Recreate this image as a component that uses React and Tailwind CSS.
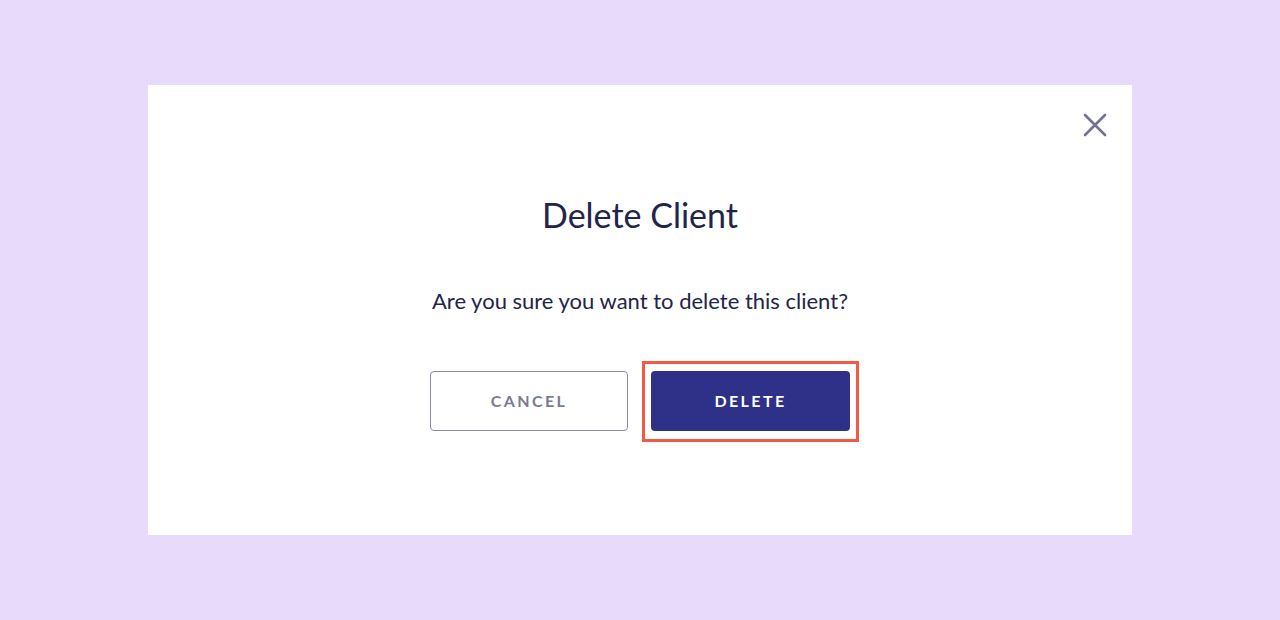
export default function App() {
  return (
    <div className="h-[620px] bg-[#e8dafb] flex items-center justify-center" style={{ fontFamily: 'Lato, "Noto Sans", sans-serif' }}>
      <div className="relative w-[984px] h-[450px] bg-white flex flex-col items-center pt-[109px]">
        {/* close */}
        <button className="absolute top-[28px] right-[25px] w-6 h-6 flex items-center justify-center text-[#727391]">
          <svg width="24" height="24" viewBox="0 0 24 24" fill="none" stroke="currentColor" strokeWidth="2.6" strokeLinecap="round">
            <path d="M2 2 L22 22 M22 2 L2 22" />
          </svg>
        </button>

        <h1 className="text-[34px] leading-[42px] text-[#23244a]">Delete Client</h1>
        <p className="mt-[51px] text-[22px] leading-[28px] text-[#23244a]">Are you sure you want to delete this client?</p>

        <div className="mt-[56px] flex gap-[23px]">
          <button className="w-[198px] h-[60px] rounded border border-[#8b8aa1] text-[16px] font-bold tracking-[0.15em] text-[#7b7a93]">
            CANCEL
          </button>
          <div className="relative">
            <span className="absolute -top-[10px] -bottom-[11px] -left-[9px] -right-[9px] border-[3px] border-[#f25a45] pointer-events-none" />
            <button className="w-[199px] h-[60px] rounded bg-[#2e3187] text-white text-[16px] font-bold tracking-[0.15em]">
              DELETE
            </button>
          </div>
        </div>
      </div>
    </div>
  )
}
